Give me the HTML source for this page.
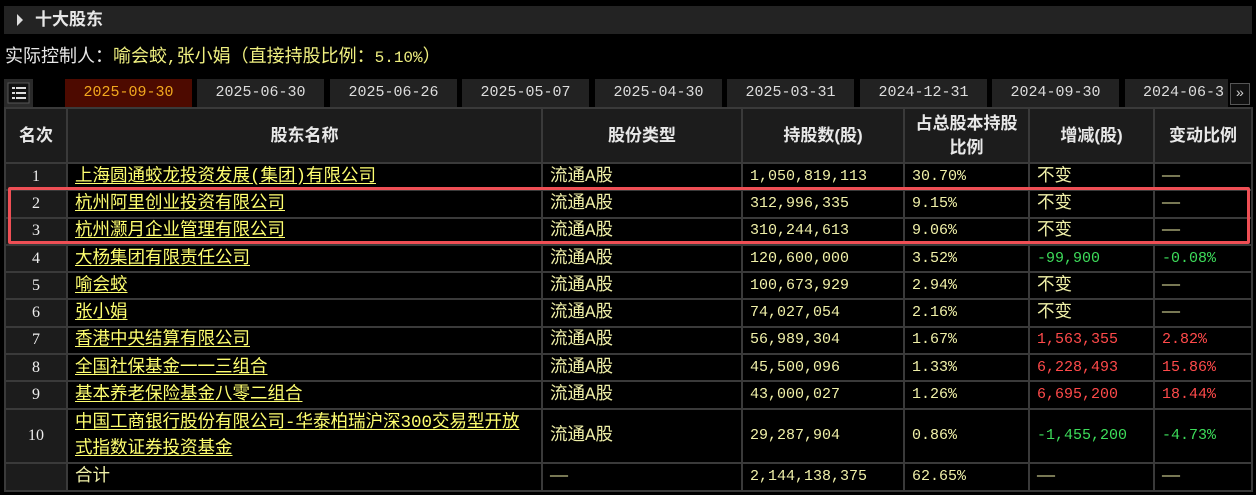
<!DOCTYPE html><html><head><meta charset="utf-8"><style>
body{margin:0;width:1256px;height:495px;background:#000;overflow:hidden;font-family:"Liberation Mono","Noto Sans CJK SC",monospace;color:#f0f0a8;position:relative}
.hdr{position:absolute;left:4px;top:6px;width:1248px;height:28px;background:#232323;color:#e8e8e8;font-size:17px;font-weight:bold;font-family:"Liberation Sans","Noto Sans CJK SC",sans-serif;line-height:28px}
.hdr .tri{position:absolute;left:13px;top:8px;width:0;height:0;border-left:6px solid #ddd;border-top:6px solid transparent;border-bottom:6px solid transparent}
.hdr span{position:absolute;left:31px}
.ctl{position:absolute;left:5px;top:47px;font-size:18px;line-height:22px;white-space:nowrap}
.ctl b{font-weight:normal;color:#e8e8e8}
.ctl i{font-style:normal;color:#f0f080}
.ctl s{text-decoration:none;font-size:16px}
.icon{position:absolute;left:4px;top:79px;width:29px;height:28px;background:#2a2a2a}
.tab{position:absolute;top:79px;width:127px;height:28px;background:#222;color:#ddd;font-size:15px;line-height:28px;text-align:center}
.tab.a{background:#4d0a00;color:#f2a81e}
.nx{position:absolute;left:1230px;top:83px;width:18px;height:20px;background:#111;border:1px solid #555;color:#ccc;font-size:14px;line-height:20px;text-align:center}
table{position:absolute;left:4px;top:107px;border-collapse:collapse;width:1247px;table-layout:fixed;font-size:17.5px}
td,th{border:2px solid #3a3a3a;padding:0 0 0 7px;white-space:nowrap;overflow:hidden}
th{background:#1c1c1c;color:#e8e8e8;font-family:"Liberation Sans","Noto Sans CJK SC",sans-serif;font-size:17px;text-align:center;padding:0;line-height:24px}
tr.h{height:55px}
td.r{background:#1c1c1c;color:#eee;text-align:center;padding:0;font-family:"Liberation Serif",serif;font-size:16px}
tr.d{height:27.3px}
td{line-height:22px}
td.m{font-size:15px}
td.n{color:#ffff70}
td.n u{text-decoration:underline;text-underline-offset:2px}
.red{color:#ff4a4a}.grn{color:#3ddc5a}
.box{position:absolute;left:8px;top:187px;width:1236px;height:51px;border:3px solid #ef4f55;border-radius:2px}
</style></head><body>
<div class="hdr"><div class="tri"></div><span>十大股东</span></div>
<div class="ctl"><b>实际控制人：</b><i>喻会蛟<s>,</s>张小娟（直接持股比例：<s>5.10%</s>）</i></div>
<div class="icon"><svg width="29" height="28"><rect x="4" y="4" width="21" height="20" fill="#111" stroke="#555"/><g fill="#ddd"><rect x="8" y="8" width="3" height="2"/><rect x="12" y="8" width="10" height="2"/><rect x="8" y="13" width="3" height="2"/><rect x="12" y="13" width="10" height="2"/><rect x="8" y="18" width="3" height="2"/><rect x="12" y="18" width="10" height="2"/></g></svg></div>
<div class="tab a" style="left:65px">2025-09-30</div>
<div class="tab" style="left:197px">2025-06-30</div>
<div class="tab" style="left:330px">2025-06-26</div>
<div class="tab" style="left:462px">2025-05-07</div>
<div class="tab" style="left:595px">2025-04-30</div>
<div class="tab" style="left:727px">2025-03-31</div>
<div class="tab" style="left:860px">2024-12-31</div>
<div class="tab" style="left:992px">2024-09-30</div>
<div class="tab" style="left:1125px;width:103px;text-align:left;padding-left:18px;box-sizing:border-box">2024-06-3</div>
<div class="nx">»</div>
<table>
<colgroup><col style="width:62px"><col style="width:475px"><col style="width:200px"><col style="width:162px"><col style="width:125px"><col style="width:125px"><col style="width:98px"></colgroup>
<tr class="h"><th>名次</th><th>股东名称</th><th>股份类型</th><th>持股数(股)</th><th>占总股本持股<br>比例</th><th>增减(股)</th><th>变动比例</th></tr>
<tr class="d"><td class="r">1</td><td class="n"><u>上海圆通蛟龙投资发展(集团)有限公司</u></td><td>流通A股</td><td class="m">1,050,819,113</td><td class="m">30.70%</td><td>不变</td><td class="m">——</td></tr>
<tr class="d"><td class="r">2</td><td class="n"><u>杭州阿里创业投资有限公司</u></td><td>流通A股</td><td class="m">312,996,335</td><td class="m">9.15%</td><td>不变</td><td class="m">——</td></tr>
<tr class="d"><td class="r">3</td><td class="n"><u>杭州灏月企业管理有限公司</u></td><td>流通A股</td><td class="m">310,244,613</td><td class="m">9.06%</td><td>不变</td><td class="m">——</td></tr>
<tr class="d"><td class="r">4</td><td class="n"><u>大杨集团有限责任公司</u></td><td>流通A股</td><td class="m">120,600,000</td><td class="m">3.52%</td><td class="m grn">-99,900</td><td class="m grn">-0.08%</td></tr>
<tr class="d"><td class="r">5</td><td class="n"><u>喻会蛟</u></td><td>流通A股</td><td class="m">100,673,929</td><td class="m">2.94%</td><td>不变</td><td class="m">——</td></tr>
<tr class="d"><td class="r">6</td><td class="n"><u>张小娟</u></td><td>流通A股</td><td class="m">74,027,054</td><td class="m">2.16%</td><td>不变</td><td class="m">——</td></tr>
<tr class="d"><td class="r">7</td><td class="n"><u>香港中央结算有限公司</u></td><td>流通A股</td><td class="m">56,989,304</td><td class="m">1.67%</td><td class="m red">1,563,355</td><td class="m red">2.82%</td></tr>
<tr class="d"><td class="r">8</td><td class="n"><u>全国社保基金一一三组合</u></td><td>流通A股</td><td class="m">45,500,096</td><td class="m">1.33%</td><td class="m red">6,228,493</td><td class="m red">15.86%</td></tr>
<tr class="d"><td class="r">9</td><td class="n"><u>基本养老保险基金八零二组合</u></td><td>流通A股</td><td class="m">43,000,027</td><td class="m">1.26%</td><td class="m red">6,695,200</td><td class="m red">18.44%</td></tr>
<tr style="height:54.6px"><td class="r">10</td><td class="n" style="line-height:26px"><u>中国工商银行股份有限公司-华泰柏瑞沪深300交易型开放</u><br><u>式指数证券投资基金</u></td><td>流通A股</td><td class="m">29,287,904</td><td class="m">0.86%</td><td class="m grn">-1,455,200</td><td class="m grn">-4.73%</td></tr>
<tr class="d"><td class="r"></td><td>合计</td><td class="m">——</td><td class="m">2,144,138,375</td><td class="m">62.65%</td><td class="m">——</td><td class="m">——</td></tr>
</table>
<div class="box"></div>
</body></html>
